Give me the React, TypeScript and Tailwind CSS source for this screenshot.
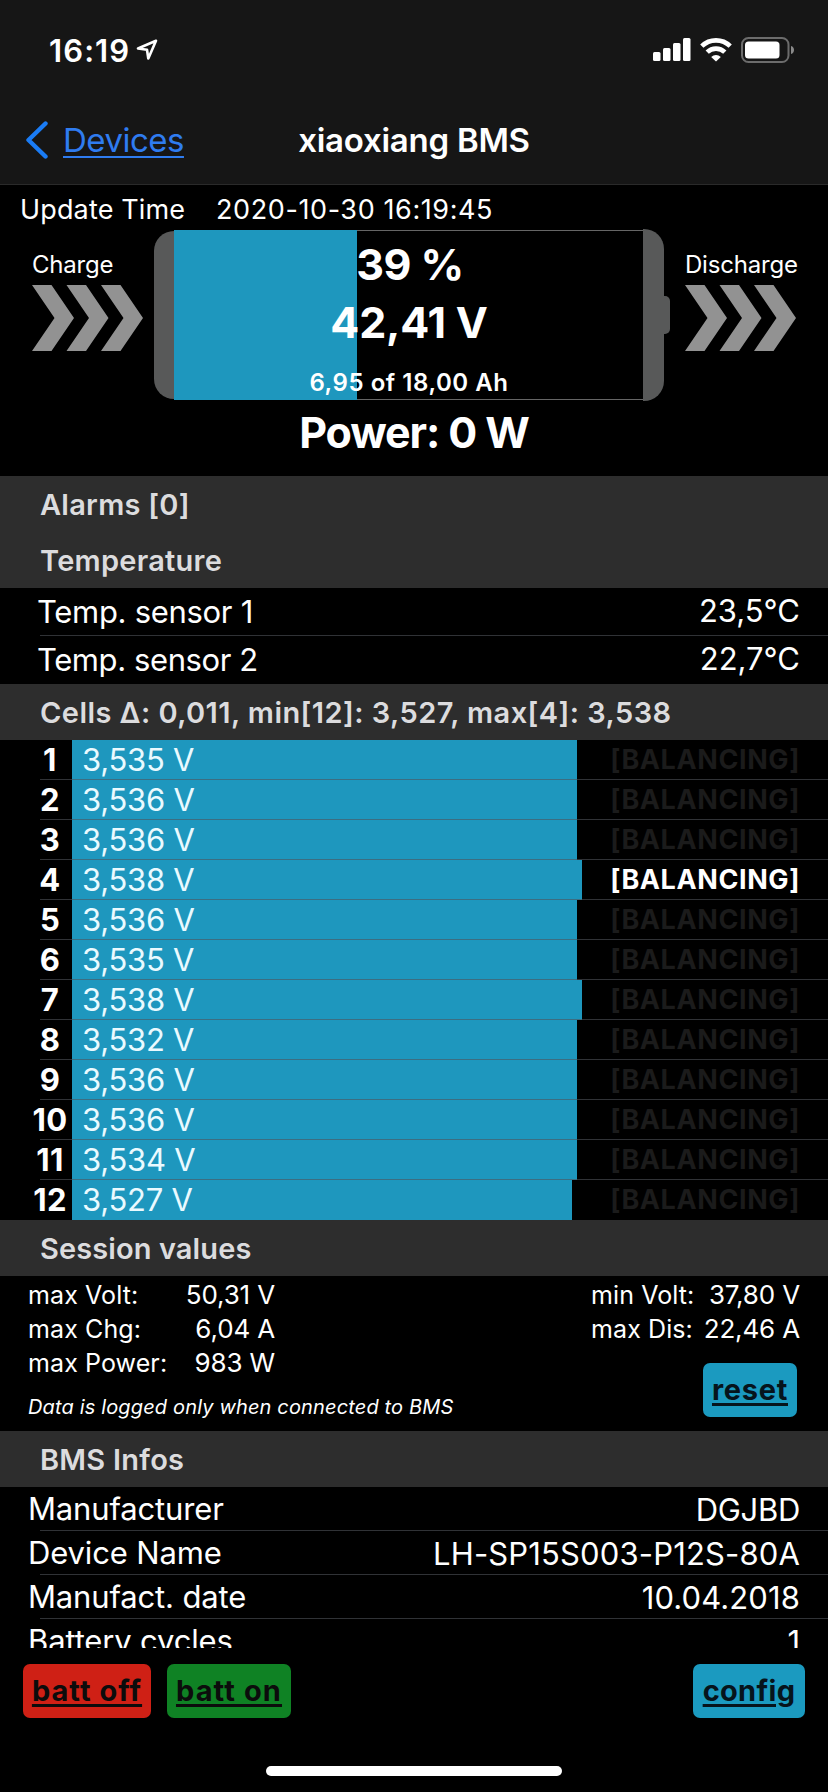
import type { ReactNode } from 'react';

const cells = [
  { volt: '3,535', bar: 'w-[505px]' },
  { volt: '3,536', bar: 'w-[505px]' },
  { volt: '3,536', bar: 'w-[505px]' },
  { volt: '3,538', bar: 'w-[510px]', balancing: true },
  { volt: '3,536', bar: 'w-[505px]' },
  { volt: '3,535', bar: 'w-[505px]' },
  { volt: '3,538', bar: 'w-[510px]' },
  { volt: '3,532', bar: 'w-[505px]' },
  { volt: '3,536', bar: 'w-[505px]' },
  { volt: '3,536', bar: 'w-[505px]' },
  { volt: '3,534', bar: 'w-[505px]' },
  { volt: '3,527', bar: 'w-[500px]' },
];

const infos = [
  { label: 'Manufacturer', value: 'DGJBD', tracking: 'tracking-[-0.3px]' },
  { label: 'Device Name', value: 'LH-SP15S003-P12S-80A', tracking: 'tracking-[0.15px]' },
  { label: 'Manufact. date', value: '10.04.2018', tracking: 'tracking-[0.1px]' },
  { label: 'Battery cycles', value: '1', tracking: '' },
];

function Arrows() {
  return (
    <svg width="112" height="66" viewBox="0 0 112 66" fill="#929292" className="block">
      {[0, 34.5, 69].map((x) => (
        <path key={x} d="M0 0h19.5l22.5 33-22.5 33H0l22.5-33z" transform={`translate(${x} 0)`} />
      ))}
    </svg>
  );
}

function SectionHeader({ children, className = 'tracking-[0.25px]' }: { children: ReactNode; className?: string }) {
  return (
    <div className={`flex h-14 items-center bg-[#2d2d2d] pl-10 text-[29px] font-semibold text-[#dcdcde] ${className}`}>
      {children}
    </div>
  );
}

function SessionRow({ label, value }: { label: string; value: string }) {
  return (
    <div className="flex h-[34px] items-center justify-between">
      <span className="pt-px text-[25px] tracking-[0.1px]">{label}</span>
      <span className="text-[26px] tracking-[-0.15px]">{value}</span>
    </div>
  );
}

function Separator() {
  return <div className="absolute right-0 bottom-0 left-10 h-px bg-[#50545a]/60" />;
}

export default function App() {
  return (
    <div className="flex h-[1792px] w-[828px] flex-col overflow-hidden bg-black font-['Inter',sans-serif] leading-none whitespace-nowrap text-white">
      {/* Status bar + navigation */}
      <header className="h-[185px] shrink-0 border-b border-[#2a2a2a] bg-[#161616]">
        <div className="flex h-[100px] items-center pr-[33px] pl-[49px]">
          <span className="text-[31px] font-semibold tracking-[1.1px]">16:19</span>
          <svg width="22" height="22" viewBox="0 0 22 22" className="ml-1.5" fill="none" stroke="#fff" strokeWidth="2.6" strokeLinejoin="round">
            <path d="M20 1.8 2 9.5l9 1.2 1.3 8.8z" />
          </svg>
          <div className="ml-auto flex items-center">
            <svg width="38" height="24" viewBox="0 0 38 24" fill="#fff">
              <rect x="0" y="14" width="7.5" height="9" rx="1.5" />
              <rect x="10" y="10" width="7.5" height="13" rx="1.5" />
              <rect x="20" y="5" width="7.5" height="18" rx="1.5" />
              <rect x="30" y="0" width="7.5" height="23" rx="1.5" />
            </svg>
            <svg width="32" height="24" viewBox="0 0 32 24" className="ml-[9px]" fill="none" stroke="#fff" strokeWidth="4.6">
              <path d="M1.8 8.2a20.2 20.2 0 0 1 28.4 0" />
              <path d="M7.2 14.2a12.6 12.6 0 0 1 17.6 0" />
              <path d="M16 23.5 11.2 19a7 7 0 0 1 9.6 0z" fill="#fff" stroke="none" />
            </svg>
            <svg width="54" height="26" viewBox="0 0 54 26" className="ml-[9px]">
              <rect x="1" y="1" width="46.5" height="24" rx="6.5" fill="none" stroke="#6c6c6c" strokeWidth="2" />
              <rect x="4" y="4.5" width="34.5" height="17" rx="3.5" fill="#fff" />
              <path d="M50 9c4 1 4 7 0 8z" fill="#8a8a8a" />
            </svg>
          </div>
        </div>
        <div className="grid h-20 grid-cols-[1fr_auto_1fr] items-center">
          <div className="flex items-center pl-[25px] text-[#2f7cf0]">
            <svg width="24" height="38" viewBox="0 0 24 38" fill="none" stroke="#1a7cf5" strokeWidth="4.4" strokeLinecap="round" strokeLinejoin="round">
              <path d="M20.5 2.5 3.5 19l17 16.5" />
            </svg>
            <span className="ml-[14px] text-[33px] tracking-[-0.5px] underline decoration-2 underline-offset-4">Devices</span>
          </div>
          <h1 className="text-[33px] font-semibold tracking-[-0.25px]">xiaoxiang BMS</h1>
          <div />
        </div>
      </header>

      {/* Pack overview */}
      <section className="h-[291px] shrink-0">
        <div className="flex h-11 items-center pt-1 text-[27px]">
          <span className="w-[196px] pl-5 tracking-[0.15px]">Update Time</span>
          <span className="pl-5 tracking-[0.6px]">2020-10-30 16:19:45</span>
        </div>
        <div className="flex h-[172px]">
          <div className="w-[154px] pl-8">
            <div className="flex h-14 items-center pt-[15px] text-[24px] tracking-[-0.2px]">Charge</div>
            <Arrows />
          </div>
          <div className="relative flex w-[516px] items-center">
            <div className="h-[168px] w-5 rounded-l-[20px] bg-[#585959]" />
            <div className="h-[170px] w-[469px] border-y border-[#666]">
              <div className="-my-px h-[170px] w-[183px] bg-[#1e97be]" />
            </div>
            <div className="h-[172px] w-[21px] rounded-r-[20px] bg-[#585959]" />
            <div className="h-[38px] w-1.5 rounded-r-[5px] bg-[#585959]" />
            <div className="absolute inset-y-0 left-0 flex w-[510px] flex-col items-center font-bold">
              <span className="flex h-[71px] items-center pl-0.5 text-[43px] tracking-[-0.5px]">39 %</span>
              <span className="flex h-[45px] items-center text-[43px] tracking-[-0.2px]">42,41 V</span>
              <span className="mt-[19px] flex h-[37px] items-center text-[24px] font-semibold tracking-[0.55px]">6,95 of 18,00 Ah</span>
            </div>
          </div>
          <div className="pl-[15px]">
            <div className="flex h-14 items-center pt-[15px] text-[24px] tracking-[-0.2px]">Discharge</div>
            <Arrows />
          </div>
        </div>
        <div className="flex h-[63px] items-center justify-center text-[43px] font-bold tracking-[-1.1px]">Power: 0 W</div>
      </section>

      <main className="h-[1172px] shrink-0 overflow-hidden">
        <SectionHeader>Alarms [0]</SectionHeader>
        <SectionHeader>Temperature</SectionHeader>
        <div className="relative flex h-12 items-center justify-between pr-7 pb-px pl-[37px] text-[31px]">
          <span className="tracking-[-0.3px]">Temp. sensor 1</span>
          <span className="pb-0.5">23,5°C</span>
          <Separator />
        </div>
        <div className="flex h-12 items-center justify-between pr-7 pb-px pl-[37px] text-[31px]">
          <span className="tracking-[-0.4px]">Temp. sensor 2</span>
          <span className="pb-0.5">22,7°C</span>
        </div>

        <SectionHeader className="tracking-[0.44px]">Cells Δ: 0,011, min[12]: 3,527, max[4]: 3,538</SectionHeader>
        {cells.map((cell, i) => (
          <div key={i} className="relative flex h-10 items-center">
            <span className="w-[72px] pb-0.5 pl-[28px] text-center text-[31px] font-bold tracking-[0.4px]">{i + 1}</span>
            <div className={`flex h-10 items-center bg-[#1e97be] pb-0.5 pl-2.5 text-[31px] tracking-[-0.25px] text-[#eafaff] ${cell.bar}`}>
              {cell.volt} V
            </div>
            <span className={`ml-auto pr-7 pb-0.5 text-[27px] font-bold tracking-[0.6px] ${cell.balancing ? 'text-white' : 'text-[#1b1b1b]'}`}>
              [BALANCING]
            </span>
            {i < cells.length - 1 && <Separator />}
          </div>
        ))}

        <SectionHeader className="tracking-[0.1px]">Session values</SectionHeader>
        <div className="relative h-[155px] pt-[2px] pr-7 pl-7">
          <div className="flex justify-between">
            <div className="w-[247px]">
              <SessionRow label="max Volt:" value="50,31 V" />
              <SessionRow label="max Chg:" value="6,04 A" />
              <SessionRow label="max Power:" value="983 W" />
            </div>
            <div className="w-[209px]">
              <SessionRow label="min Volt:" value="37,80 V" />
              <SessionRow label="max Dis:" value="22,46 A" />
            </div>
          </div>
          <p className="mt-[17px] text-[20px] tracking-[0.15px] italic">Data is logged only when connected to BMS</p>
          <button className="absolute top-[87px] right-[31px] flex h-[54px] w-[94px] items-center justify-center rounded-[7px] bg-[#1b9ac0] pb-0.5 text-[29px] font-bold tracking-[0.7px] text-[#06141c] underline decoration-[3px] underline-offset-[3px]">
            reset
          </button>
        </div>

        <SectionHeader>BMS Infos</SectionHeader>
        {infos.map((info) => (
          <div key={info.label} className="relative flex h-11 items-center justify-between pr-7 pl-7 text-[31px]">
            <span className="pb-0.5 tracking-[-0.15px]">{info.label}</span>
            <span className={info.tracking}>{info.value}</span>
            <Separator />
          </div>
        ))}
      </main>

      {/* Bottom toolbar */}
      <footer className="flex flex-1 flex-col items-center">
        <div className="flex w-full items-center gap-4 pt-4 pr-[23px] pl-[23px] text-[29px] font-bold text-[#0c0c0c]">
          <button className="h-[54px] w-32 rounded-[7px] bg-[#cf2015] pb-0.5 tracking-[1px] underline decoration-[3px] underline-offset-[3px]">batt off</button>
          <button className="h-[54px] w-[124px] rounded-[7px] bg-[#0f8224] pb-0.5 tracking-[1.1px] underline decoration-[3px] underline-offset-[3px]">batt on</button>
          <button className="ml-auto h-[54px] w-28 rounded-[7px] bg-[#1b9ac0] pb-0.5 tracking-[0.3px] text-[#06141c] underline decoration-[3px] underline-offset-[3px]">config</button>
        </div>
        <div className="mt-12 h-2.5 w-[296px] rounded-full bg-white" />
      </footer>
    </div>
  );
}
